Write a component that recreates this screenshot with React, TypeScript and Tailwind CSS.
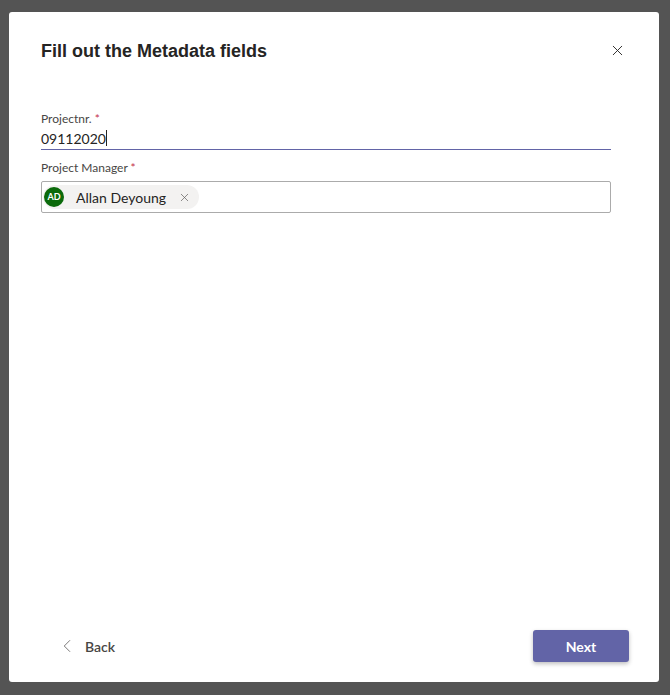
import { X, ChevronLeft } from 'lucide-react'

export default function App() {
  return (
    <div className="w-[670px] h-[695px] bg-[#545454] pt-[12px] pl-[9px]" style={{ fontFamily: 'Lato, "Noto Sans", sans-serif' }}>
      <div className="w-[650px] h-[670px] bg-white rounded-[3px] flex flex-col">
        {/* header */}
        <div className="flex items-start justify-between pl-[32px] pr-[33px] pt-[28px]">
          <h1 className="text-[18px] leading-[22px] font-bold text-[#252423]" style={{ fontFamily: '"Liberation Sans", Arial, sans-serif' }}>
            Fill out the Metadata fields
          </h1>
          <button className="mt-[2px] text-[#252423]">
            <X className="w-[17px] h-[17px]" strokeWidth={1.3} />
          </button>
        </div>

        {/* fields */}
        <div className="px-[32px] pt-[49px] pr-[48px] flex flex-col">
          <label className="text-[12px] leading-[16px] text-[#484644]">
            Projectnr. <span className="text-[#c4314b]">*</span>
          </label>
          <div className="flex items-center h-[23px] border-b border-[#6264a7] text-[14px] text-[#252423]">
            09112020<span className="w-px h-[16px] bg-[#252423]" />
          </div>

          <label className="text-[12px] leading-[16px] text-[#484644] mt-[10px]">
            Project Manager <span className="text-[#c4314b]">*</span>
          </label>
          <div className="mt-[5px] h-[32px] border border-[#ababab] rounded-[2px] flex items-center px-[1px]">
            <div className="flex items-center h-[24px] rounded-full bg-[#f3f2f1] pr-[8px]">
              <div className="w-[20px] h-[20px] rounded-full bg-[#0b6a0b] text-white text-[9px] font-bold flex items-center justify-center ml-[1px]">
                AD
              </div>
              <span className="ml-[12px] text-[14px] text-[#252423]">Allan Deyoung</span>
              <X className="ml-[12px] w-[13px] h-[13px] text-[#605e5c]" strokeWidth={1.3} />
            </div>
          </div>
        </div>

        {/* footer */}
        <div className="mt-auto flex items-center justify-between pl-[47px] pr-[30px] pb-[20px]">
          <button className="flex items-center text-[14px] font-semibold text-[#484644]">
            <ChevronLeft className="w-[22px] h-[22px] text-[#605e5c]" strokeWidth={0.9} />
            <span className="ml-[7px]">Back</span>
          </button>
          <button className="w-[96px] h-[32px] rounded-[3px] bg-[#6264a7] text-white text-[14px] font-bold shadow-[0_2px_4px_rgba(0,0,0,0.25)]">
            Next
          </button>
        </div>
      </div>
    </div>
  )
}
